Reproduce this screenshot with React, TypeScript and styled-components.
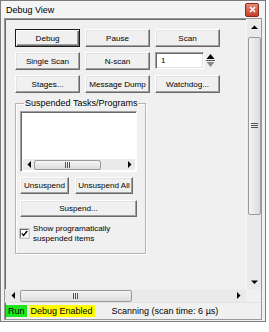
import React from 'react';
import styled, { createGlobalStyle, css } from 'styled-components';

const GlobalStyle = createGlobalStyle`
  html, body { margin: 0; padding: 0; background: #fff; }
  body { font-family: "Liberation Sans", Arial, sans-serif; color: #000; }
`;

const Window = styled.div`
  width: 266px;
  height: 322px;
  box-sizing: border-box;
  border: 1px solid #7d7d7d;
  background: #f0f0f0;
  display: flex;
  flex-direction: column;
`;

const TitleBar = styled.div`
  height: 17px;
  flex: none;
  display: flex;
  align-items: center;
  justify-content: space-between;
  padding: 0 6px 0 5px;
  font-size: 9px;
  background: #f4f4f4;
`;

const CloseBtn = styled.div`
  width: 12px;
  height: 12px;
  border: 1px solid #8c2a1c;
  border-radius: 2px;
  background: linear-gradient(#e88a72, #c8402c);
  display: flex;
  align-items: center;
  justify-content: center;
`;

const Frame = styled.div`
  flex: 1;
  margin: 0 3px 1px 3px;
  border: 1px solid #9a9a9a;
  box-shadow: inset 1px 1px #6a6a6a;
  display: flex;
  flex-direction: column;
  min-height: 0;
`;

const Pane = styled.div`
  height: 283px;
  flex: none;
  display: grid;
  grid-template-columns: minmax(0, 1fr) 15px;
  grid-template-rows: minmax(0, 1fr) 13px;
`;

const Content = styled.div`
  grid-column: 1;
  grid-row: 1;
  overflow: hidden;
  padding: 10px 0 0 10px;
  font-size: 8.1px;
`;

const ButtonGrid = styled.div`
  display: grid;
  grid-template-columns: 65px 65px 65px;
  grid-auto-rows: 18px;
  column-gap: 5px;
  row-gap: 5px;
`;

const Btn = styled.button<{ $default?: boolean; $w?: number; $h?: number }>`
  box-sizing: border-box;
  width: ${p => (p.$w ? `${p.$w}px` : '100%')};
  height: ${p => (p.$h ? `${p.$h}px` : '100%')};
  margin: 0;
  padding: 0;
  font: 8.1px "Liberation Sans", Arial, sans-serif;
  color: #000;
  background: #f0f0f0;
  border: 1px solid;
  border-color: #fff #696969 #696969 #fff;
  box-shadow: inset -1px -1px #a0a0a0, inset 1px 1px #e3e3e3;
  white-space: nowrap;
  ${p =>
    p.$default &&
    css`
      border-color: #1a1a1a;
      box-shadow: inset 1px 1px #fff, inset -1px -1px #696969, inset -2px -2px #a0a0a0;
    `}
`;

const SpinWrap = styled.div`
  display: flex;
  gap: 1px;
  height: 17px;
`;

const NumInput = styled.div`
  box-sizing: border-box;
  width: 49px;
  height: 17px;
  background: #fff;
  border: 1px solid;
  border-color: #a0a0a0 #fff #fff #a0a0a0;
  box-shadow: inset 1px 1px #696969, inset -1px -1px #e3e3e3;
  padding: 3px 0 0 5px;
  font-size: 8.1px;
`;

const Group = styled.fieldset`
  margin: 5px 0 0 0;
  padding: 3px 0 9px 4px;
  width: 131px;
  box-sizing: border-box;
  border: 1px solid #b4b4b4;
  box-shadow: inset 1px 1px #fff, 1px 1px #fff;
  min-inline-size: 0;
`;

const Legend = styled.legend`
  margin-left: 4px;
  padding: 0 1px;
  font-size: 9px;
  line-height: 10px;
  white-space: nowrap;
`;

const ListBox = styled.div`
  box-sizing: border-box;
  width: 117px;
  height: 61px;
  background: #fff;
  border: 1px solid;
  border-color: #a0a0a0 #fff #fff #a0a0a0;
  box-shadow: inset 1px 1px #696969;
  display: flex;
  flex-direction: column;
  justify-content: flex-end;
  padding: 2px 1px 1px 2px;
`;

const Row = styled.div<{ $top: number }>`
  display: flex;
  gap: 6px;
  margin-top: ${p => p.$top}px;
`;

const CheckRow = styled.div`
  display: flex;
  gap: 4px;
  margin-top: 7px;
  line-height: 10px;
`;

const CheckBox = styled.div`
  flex: none;
  box-sizing: border-box;
  width: 9px;
  height: 9px;
  margin-top: 5px;
  background: #fff;
  border: 1px solid;
  border-color: #6a6a6a #e8e8e8 #e8e8e8 #6a6a6a;
  box-shadow: 0 0 0 0.5px #9a9a9a;
  display: flex;
  align-items: center;
  justify-content: center;
`;

const HScroll = styled.div<{ $h: number }>`
  grid-column: 1;
  grid-row: 2;
  height: ${p => p.$h}px;
  display: flex;
  align-items: center;
  background: #eaeaea;
  box-sizing: border-box;
`;

const VScroll = styled.div`
  grid-column: 2;
  grid-row: 1;
  display: flex;
  flex-direction: column;
  align-items: center;
  background: #eaeaea;
  border-left: 1px solid #f7f7f7;
  min-height: 0;
`;

const Arrow = styled.div<{ $size: number }>`
  flex: none;
  width: ${p => p.$size}px;
  height: ${p => p.$size}px;
  display: flex;
  align-items: center;
  justify-content: center;
`;

const Thumb = styled.div<{ $vertical?: boolean }>`
  flex: none;
  box-sizing: border-box;
  border: 1px solid #9a9a9a;
  border-radius: 2px;
  background: ${p =>
    p.$vertical ? 'linear-gradient(90deg, #f4f4f4, #dcdcdc)' : 'linear-gradient(#f4f4f4, #dcdcdc)'};
  display: flex;
  align-items: center;
  justify-content: center;
`;

const Spacer = styled.div`
  flex: 1;
`;

const StatusBar = styled.div`
  flex: 1;
  display: flex;
  align-items: center;
  padding-left: 1px;
  font-size: 9px;
  border-top: 1px solid #e2e2e2;
`;

const Cell = styled.div<{ $bg?: string; $gap?: number }>`
  height: 12px;
  line-height: 12px;
  padding: 0 2px;
  background: ${p => p.$bg || 'transparent'};
  margin-right: ${p => p.$gap ?? 2}px;
  white-space: nowrap;
`;

const Tri = ({ dir, color = '#000' }: { dir: 'up' | 'down' | 'left' | 'right'; color?: string }) => {
  const pts = {
    up: '0,4 3.5,0.5 7,4',
    down: '0,0.5 7,0.5 3.5,4',
    left: '4,0 4,7 0.5,3.5',
    right: '0,0 0,7 3.5,3.5',
  }[dir];
  const vert = dir === 'up' || dir === 'down';
  return (
    <svg width={vert ? 7 : 4} height={vert ? 4 : 7} viewBox={vert ? '0 0 7 4' : '0 0 4 7'}>
      <polygon points={pts} fill={color} />
    </svg>
  );
};

const Grip = ({ vertical }: { vertical?: boolean }) =>
  vertical ? (
    <svg width="7" height="6" viewBox="0 0 7 6">
      <path d="M0 0.5H7M0 2.5H7M0 4.5H7" stroke="#555" strokeWidth="1" />
    </svg>
  ) : (
    <svg width="6" height="6" viewBox="0 0 6 6">
      <path d="M0.5 0V6M2.5 0V6M4.5 0V6" stroke="#555" strokeWidth="1" />
    </svg>
  );

const Spinner = () => (
  <svg width="11" height="17" viewBox="0 0 11 17">
    <polygon points="1.5,7 5.5,2 9.5,7" fill="#000" />
    <path d="M1 8.5H10" stroke="#555" strokeWidth="1" />
    <polygon points="1.5,10 9.5,10 5.5,15" fill="#8a8a8a" />
  </svg>
);

export default function App() {
  return (
    <>
      <GlobalStyle />
      <Window>
        <TitleBar>
          <span>Debug View</span>
          <CloseBtn>
            <svg width="7" height="7" viewBox="0 0 7 7">
              <path d="M1 1L6 6M6 1L1 6" stroke="#fff" strokeWidth="1.6" />
            </svg>
          </CloseBtn>
        </TitleBar>
        <Frame>
          <Pane>
            <Content>
              <ButtonGrid>
                <Btn $default>Debug</Btn>
                <Btn>Pause</Btn>
                <Btn>Scan</Btn>
                <Btn>Single Scan</Btn>
                <Btn>N-scan</Btn>
                <SpinWrap>
                  <NumInput>1</NumInput>
                  <Spinner />
                </SpinWrap>
                <Btn>Stages...</Btn>
                <Btn>Message Dump</Btn>
                <Btn>Watchdog...</Btn>
              </ButtonGrid>
              <Group>
                <Legend>Suspended Tasks/Programs</Legend>
                <ListBox>
                  <HScroll $h={11}>
                    <Arrow $size={11}>
                      <Tri dir="left" />
                    </Arrow>
                    <Thumb style={{ width: 67, height: 10 }}>
                      <Grip />
                    </Thumb>
                    <Spacer />
                    <Arrow $size={11}>
                      <Tri dir="right" />
                    </Arrow>
                  </HScroll>
                </ListBox>
                <Row $top={5}>
                  <Btn $w={49} $h={17}>Unsuspend</Btn>
                  <Btn $w={58} $h={17}>Unsuspend All</Btn>
                </Row>
                <Row $top={6}>
                  <Btn $w={117} $h={17}>Suspend...</Btn>
                </Row>
                <CheckRow>
                  <CheckBox>
                    <svg width="7" height="7" viewBox="0 0 7 7">
                      <path d="M0.8 3.4L2.6 5.4L6.2 1" stroke="#000" strokeWidth="1.4" fill="none" />
                    </svg>
                  </CheckBox>
                  <span>
                    Show programatically
                    <br />
                    suspended items
                  </span>
                </CheckRow>
              </Group>
            </Content>
            <VScroll>
              <Arrow $size={15}>
                <Tri dir="up" />
              </Arrow>
              <Thumb $vertical style={{ width: 13, height: 178, marginTop: 3 }}>
                <Grip vertical />
              </Thumb>
              <Spacer />
              <Arrow $size={15}>
                <Tri dir="down" />
              </Arrow>
            </VScroll>
            <HScroll $h={13}>
              <Arrow $size={15}>
                <Tri dir="left" />
              </Arrow>
              <Thumb style={{ width: 112, height: 12 }}>
                <Grip />
              </Thumb>
              <Spacer />
              <Arrow $size={15}>
                <Tri dir="right" />
              </Arrow>
            </HScroll>
          </Pane>
          <StatusBar>
            <Cell $bg="#1de61d">Run</Cell>
            <Cell $bg="#ffff00" $gap={15}>Debug Enabled</Cell>
            <Cell>Scanning (scan time: 6 µs)</Cell>
          </StatusBar>
        </Frame>
      </Window>
    </>
  );
}
